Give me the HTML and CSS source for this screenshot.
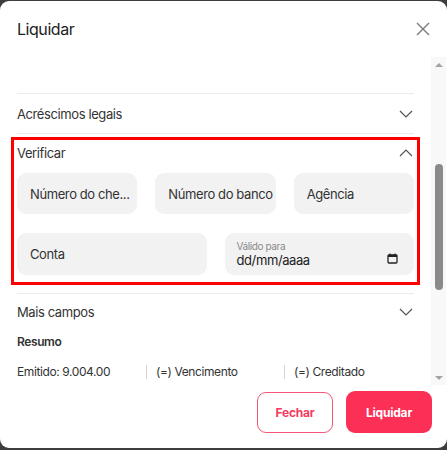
FILE: index.html
```html
<!DOCTYPE html>
<html lang="pt">
<head>
<meta charset="utf-8">
<title>Liquidar</title>
<link rel="stylesheet" href="styles.css">
</head>
<body>
<div class="modal">
  <div class="header">
    <h1 class="title">Liquidar</h1>
    <svg class="close" width="14" height="14" viewBox="0 0 14 14"><path d="M1 1L13 13M13 1L1 13" stroke="#7a7a7a" stroke-width="1.4" fill="none"/></svg>
  </div>
  <div class="body">
    <div class="scroll">
      <div class="spacer"></div>
      <div class="acc-row">
        <span>Acréscimos legais</span>
        <svg class="chev" width="14" height="8" viewBox="0 0 14 8"><path d="M1 1L7 7L13 1" stroke="#555" stroke-width="1.2" fill="none"/></svg>
      </div>
      <div class="verify">
        <div class="verify-head">
          <span>Verificar</span>
          <svg class="chev" width="14" height="8" viewBox="0 0 14 8"><path d="M1 7L7 1L13 7" stroke="#555" stroke-width="1.2" fill="none"/></svg>
        </div>
        <div class="grid3">
          <div class="field">Número do che...</div>
          <div class="field">Número do banco</div>
          <div class="field">Agência</div>
        </div>
        <div class="grid2">
          <div class="field">Conta</div>
          <div class="field date">
            <div class="date-text">
              <span class="date-label">Válido para</span>
              <span class="date-value">dd/mm/aaaa</span>
            </div>
            <svg class="cal" width="11" height="11" viewBox="0 0 11 11"><rect x="1" y="1.8" width="9" height="8.2" rx="1" stroke="#222" stroke-width="1.3" fill="none"/><rect x="1" y="1.8" width="9" height="2.2" fill="#222"/><path d="M3 0.5V2M8 0.5V2" stroke="#222" stroke-width="1.2"/></svg>
          </div>
        </div>
      </div>
      <div class="acc-row more">
        <span>Mais campos</span>
        <svg class="chev" width="14" height="8" viewBox="0 0 14 8"><path d="M1 1L7 7L13 1" stroke="#555" stroke-width="1.2" fill="none"/></svg>
      </div>
      <div class="resumo">Resumo</div>
      <div class="summary">
        <div class="col first">Emitido: 9.004.00</div>
        <div class="col">(=) Vencimento</div>
        <div class="col last">(=) Creditado</div>
      </div>
    </div>
    <div class="scrollbar">
      <div class="arrow up"></div>
      <div class="track"><div class="thumb"></div></div>
      <div class="arrow down"></div>
    </div>
  </div>
  <div class="footer">
    <button class="btn outline">Fechar</button>
    <button class="btn primary">Liquidar</button>
  </div>
</div>
</body>
</html>
```

FILE: styles.css
```css
* { box-sizing: border-box; }
html, body { margin: 0; padding: 0; }
body {
  background: #3d3d3d;
  width: 447px;
  height: 450px;
  overflow: hidden;
  font-family: Inter, "Noto Sans", sans-serif;
  color: #333;
  letter-spacing: -0.4px;
}
.modal {
  width: 447px;
  height: 447px;
  margin-top: 1px;
  background: #fff;
  border-radius: 9px;
  display: flex;
  flex-direction: column;
  overflow: hidden;
}
.header {
  height: 56px;
  flex: none;
  display: flex;
  align-items: center;
  justify-content: space-between;
  padding: 0 17px 0 17px;
}
.title {
  margin: 0;
  font-size: 16px;
  font-weight: 400;
  color: #222;
  letter-spacing: -0.45px;
}
.close { display: block; }
.body {
  flex: none;
  height: 328px;
  display: flex;
}
.scroll {
  flex: 1;
  overflow: hidden;
  padding: 0 17px;
  height: 322px;
}
.spacer {
  height: 37px;
  border-bottom: 1px solid #ececec;
}
.acc-row {
  height: 40px;
  display: flex;
  align-items: center;
  justify-content: space-between;
  border-bottom: 1px solid #ececec;
  font-size: 13px;
  color: #333;
}
.chev { margin-right: 1px; }
.verify {
  margin: 3px -6px 8px;
  border: 3px solid #ff0000;
  padding: 0 3px 7px;
}
.verify-head {
  height: 26px;
  display: flex;
  align-items: center;
  justify-content: space-between;
  font-size: 13px;
  color: #333;
}
.grid3 {
  margin-top: 7px;
  display: grid;
  grid-template-columns: repeat(3, 1fr);
  gap: 18px;
}
.grid2 {
  margin-top: 19px;
  display: grid;
  grid-template-columns: repeat(2, 1fr);
  gap: 18px;
}
.field {
  height: 41px;
  background: #f2f2f2;
  border-radius: 9px;
  display: flex;
  align-items: center;
  padding: 0 12px 0 13px;
  font-size: 13px;
  color: #333;
  white-space: nowrap;
  overflow: hidden;
}
.grid2 .field { height: 42px; }
.date {
  justify-content: space-between;
  padding: 0 16px 0 12px;
}
.date-text {
  display: flex;
  flex-direction: column;
  line-height: 1;
}
.date-label {
  font-size: 10px;
  color: #8a8a8a;
  margin-bottom: 3px;
}
.date-value {
  font-size: 13px;
  color: #222;
}
.cal { margin-top: 8px; }
.acc-row.more {
  border-bottom: none;
  border-top: 1px solid #ececec;
  height: 37px;
}
.resumo {
  font-size: 12px;
  font-weight: 600;
  color: #333;
  height: 22px;
  display: flex;
  align-items: center;
}
.summary {
  display: flex;
  margin-top: 13px;
  font-size: 12px;
  color: #333;
  line-height: 14px;
}
.col {
  flex: none;
  width: 138px;
  padding-left: 9px;
  border-left: 1px solid #d4d4d4;
  white-space: nowrap;
}
.col.first {
  width: 129px;
  padding-left: 0;
  border-left: none;
}
.col.last { width: 130px; }
.scrollbar {
  width: 15px;
  flex: none;
  margin-right: 1px;
  background: #f8f8f8;
  display: flex;
  flex-direction: column;
  align-items: center;
}
.arrow {
  height: 15px;
  width: 15px;
  flex: none;
  display: flex;
  align-items: center;
  justify-content: center;
}
.arrow::before {
  content: "";
  width: 0;
  height: 0;
  border-left: 4px solid transparent;
  border-right: 4px solid transparent;
}
.arrow.up::before { border-bottom: 4px solid #a3a3a3; }
.arrow.down::before { border-top: 4px solid #a3a3a3; }
.track {
  flex: 1;
  width: 15px;
  padding-top: 92px;
  display: flex;
  justify-content: center;
}
.thumb {
  width: 8px;
  height: 126px;
  background: #8a8a8a;
  border-radius: 4px;
}
.footer {
  flex: 1;
  display: flex;
  justify-content: flex-end;
  align-items: flex-start;
  gap: 13px;
  padding: 6px 15px 0 0;
}
.btn {
  font-family: Inter, "Noto Sans", sans-serif;
  font-size: 12px;
  font-weight: 700;
  letter-spacing: -0.2px;
  border-radius: 9px;
  height: 42px;
  cursor: pointer;
}
.btn.outline {
  width: 76px;
  height: 41px;
  margin-top: 1px;
  background: #fff;
  color: #f43a60;
  border: 1px solid #f5567a;
}
.btn.primary {
  width: 86px;
  background: #fc2f57;
  color: #fff;
  border: none;
}
```
